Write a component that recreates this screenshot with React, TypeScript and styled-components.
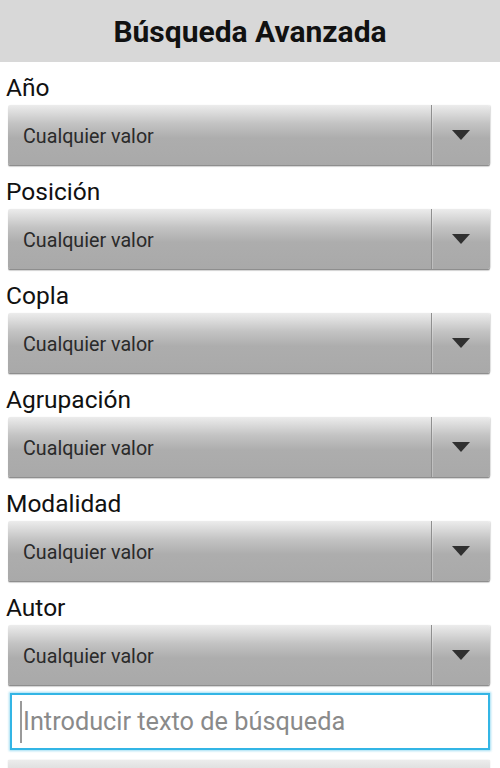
import React from "react";
import styled, { createGlobalStyle } from "styled-components";

const Global = createGlobalStyle`
  html, body { margin: 0; padding: 0; background: #ffffff; }
  body { font-family: Roboto, "Noto Sans", sans-serif; width: 500px; height: 768px; overflow: hidden; }
`;

const Page = styled.div`
  display: flex;
  flex-direction: column;
  width: 500px;
`;

const Header = styled.header`
  height: 62px;
  background: #d8d8d8;
  display: flex;
  align-items: center;
  justify-content: center;
  font-family: Roboto, sans-serif;
  font-weight: 700;
  font-size: 30px;
  color: #111;
`;

const Field = styled.section`
  display: flex;
  flex-direction: column;
`;

const Label = styled.div<{ $first?: boolean }>`
  height: ${(p) => (p.$first ? 43 : 42)}px;
  box-sizing: border-box;
  padding: ${(p) => (p.$first ? 12 : 11)}px 0 0 6px;
  font-size: 24.5px;
  line-height: 28px;
  color: #111;
`;

const Spinner = styled.div`
  height: 60px;
  margin: 0 10px 2px 8px;
  display: flex;
  align-items: stretch;
  background: linear-gradient(to bottom, #ececec 0%, #c4c4c4 30%, #adadad 55%, #a9a9a9 100%);
  border-radius: 2px;
  box-shadow: 0 1px 0 #8e8e8e, 0 2px 1px rgba(0, 0, 0, 0.18), 1px 0 1px rgba(0,0,0,0.12);
`;

const Value = styled.div`
  flex: 1;
  display: flex;
  align-items: center;
  padding-left: 15px;
  padding-top: 2px;
  font-size: 19.7px;
  color: #2a2a2a;
`;

const ArrowBox = styled.div`
  width: 58px;
  border-left: 1px solid #8f8f8f;
  box-shadow: inset 1px 0 0 rgba(255,255,255,0.25);
  display: flex;
  align-items: center;
  justify-content: center;
`;

const SearchBox = styled.div`
  margin: 6px 10px 0 10px;
  height: 57px;
  box-sizing: border-box;
  border: 2px solid #33b5e5;
  box-shadow: 0 0 2px 1px rgba(51, 181, 229, 0.45);
  display: flex;
  align-items: center;
  padding-left: 8px;
  background: #fff;
`;

const Caret = styled.span`
  width: 2px;
  height: 42px;
  background: #9a9a9a;
  margin-right: 1px;
`;

const Placeholder = styled.span`
  font-size: 25.3px;
  color: #8a8a8a;
`;

const NextSpinner = styled.div`
  margin: 10px 10px 0 8px;
  height: 20px;
  background: linear-gradient(to bottom, #ececec 0%, #d0d0d0 100%);
  border-radius: 2px;
  box-shadow: 0 0 1px rgba(0,0,0,0.3);
`;

const Arrow = () => (
  <svg width="18" height="10" viewBox="0 0 18 10">
    <polygon points="0,0 18,0 9,10" fill="#303030" />
  </svg>
);

const fields = ["Año", "Posición", "Copla", "Agrupación", "Modalidad", "Autor"];

export default function App() {
  return (
    <Page>
      <Global />
      <Header>Búsqueda Avanzada</Header>
      {fields.map((f, i) => (
        <Field key={f}>
          <Label $first={i === 0}>{f}</Label>
          <Spinner>
            <Value>Cualquier valor</Value>
            <ArrowBox>
              <Arrow />
            </ArrowBox>
          </Spinner>
        </Field>
      ))}
      <SearchBox>
        <Caret />
        <Placeholder>Introducir texto de búsqueda</Placeholder>
      </SearchBox>
      <NextSpinner />
    </Page>
  );
}
